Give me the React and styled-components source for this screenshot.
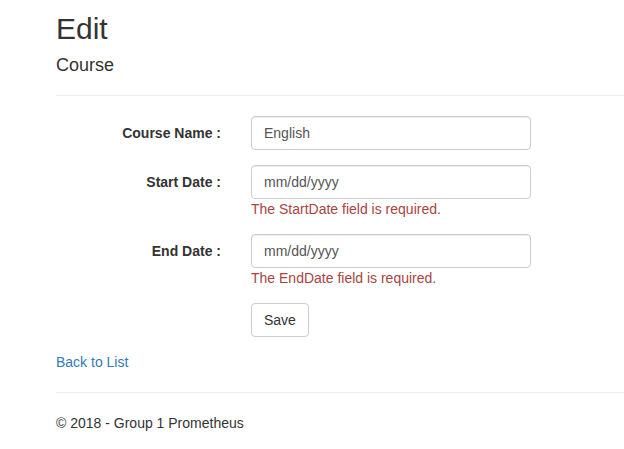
import React from "react";
import styled, { createGlobalStyle } from "styled-components";

const GlobalStyle = createGlobalStyle`
  html, body {
    margin: 0;
    padding: 0;
    background: #fff;
  }
  body {
    font-family: "Liberation Sans", Arial, sans-serif;
    font-size: 14px;
    line-height: 20px;
    color: #333;
  }
  * {
    box-sizing: border-box;
  }
`;

const Page = styled.div`
  padding: 12px 0 0 56px;
`;

const Title = styled.h2`
  margin: 0 0 10px;
  font-size: 30px;
  font-weight: 500;
  line-height: 33px;
`;

const Subtitle = styled.h4`
  margin: 0 0 10px;
  font-size: 18px;
  font-weight: 500;
  line-height: 20px;
`;

const Rule = styled.hr`
  margin: 20px 0;
  border: 0;
  border-top: 1px solid #eee;
  height: 0;
`;

const Form = styled.form`
  display: flex;
  flex-direction: column;
  gap: 15px;
`;

const FormGroup = styled.div`
  display: grid;
  grid-template-columns: 165px 1fr;
  column-gap: 30px;
`;

const Label = styled.label`
  padding-top: 7px;
  text-align: right;
  font-weight: 700;
`;

const Field = styled.div`
  display: flex;
  flex-direction: column;
  align-items: flex-start;
`;

const Input = styled.input`
  display: block;
  width: 280px;
  height: 34px;
  padding: 6px 12px;
  font: inherit;
  font-size: 14px;
  color: #555;
  background: #fff;
  border: 1px solid #ccc;
  border-radius: 4px;
  box-shadow: inset 0 1px 1px rgba(0, 0, 0, 0.075);
  outline: none;
`;

const Error = styled.span`
  color: #a94442;
`;

const Button = styled.button`
  height: 34px;
  padding: 6px 12px;
  font: inherit;
  font-size: 14px;
  color: #333;
  background: #fff;
  border: 1px solid #ccc;
  border-radius: 4px;
  cursor: pointer;
`;

const BackLink = styled.a`
  display: block;
  margin-top: 15px;
  color: #337ab7;
  text-decoration: none;
`;

const Footer = styled.footer`
  p {
    margin: 0;
  }
`;

const fields = [
  { label: "Course Name :", value: "English" },
  { label: "Start Date :", value: "mm/dd/yyyy", error: "The StartDate field is required." },
  { label: "End Date :", value: "mm/dd/yyyy", error: "The EndDate field is required." },
];

export default function App() {
  return (
    <>
      <GlobalStyle />
      <Page>
        <Title>Edit</Title>
        <Subtitle>Course</Subtitle>
        <Rule />
        <Form onSubmit={(e) => e.preventDefault()}>
          {fields.map((f) => (
            <FormGroup key={f.label}>
              <Label>{f.label}</Label>
              <Field>
                <Input type="text" value={f.value} readOnly />
                {f.error && <Error>{f.error}</Error>}
              </Field>
            </FormGroup>
          ))}
          <FormGroup>
            <span />
            <Field>
              <Button type="submit">Save</Button>
            </Field>
          </FormGroup>
        </Form>
        <BackLink href="#">Back to List</BackLink>
        <Rule />
        <Footer>
          <p>© 2018 - Group 1 Prometheus</p>
        </Footer>
      </Page>
    </>
  );
}
